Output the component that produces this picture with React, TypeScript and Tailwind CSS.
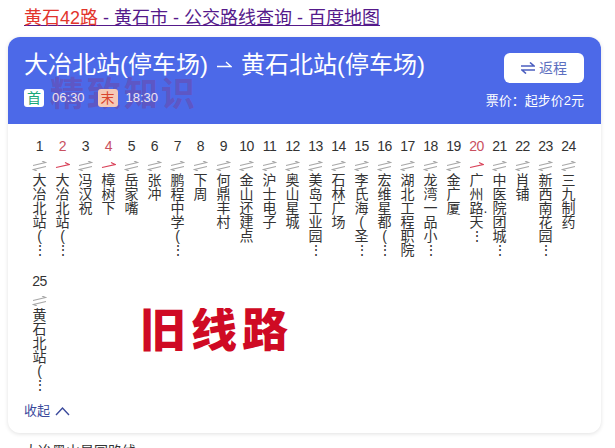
const font = "font-['Liberation_Sans','Noto_Sans_CJK_SC',sans-serif]";

const stops = [
  { name: "大冶北站(⋮" },
  { name: "大冶北站(⋮", one: true },
  { name: "冯汉祝" },
  { name: "樟树下", one: true },
  { name: "岳家嘴" },
  { name: "张冲" },
  { name: "鹏程中学(⋮" },
  { name: "下周" },
  { name: "何鼎丰村" },
  { name: "金山还建点" },
  { name: "沪士电子" },
  { name: "奥山星城" },
  { name: "美岛工业园⋮" },
  { name: "石林广场" },
  { name: "李氏海(圣⋮" },
  { name: "宏维星都(⋮" },
  { name: "湖北工程职院" },
  { name: "龙湾一品小⋮" },
  { name: "金广厦" },
  { name: "广州路.天⋮", one: true },
  { name: "中医院团城⋮" },
  { name: "肖铺" },
  { name: "新西南花园⋮" },
  { name: "三九制药" },
  { name: "黄石北站(⋮" },
];

const BothWays = () => (
  <svg width="15" height="10" viewBox="0 0 15 10" fill="none" stroke="#a8a8a8" strokeWidth="1.2">
    <path d="M1 4.5 L13.5 1.5 L10 0" />
    <path d="M14 5.5 L1.5 8.5 L5 10" />
  </svg>
);

const OneWay = () => (
  <svg width="15" height="10" viewBox="0 0 15 10" fill="none" stroke="#d9435a" strokeWidth="1.2">
    <path d="M1 6.5 L14 3.5 L10 1.5" />
  </svg>
);

const Stop = ({ index, name, one }: { index: number; name: string; one?: boolean }) => (
  <div className="flex h-[126px] w-[23px] flex-col items-center">
    <div className={`text-sm leading-[20px] tracking-[-0.5px] ${one ? "text-[#c9505f]" : "text-[#333]"}`}>{index}</div>
    <div className="mt-[4px] flex h-[11px] items-center">{one ? <OneWay /> : <BothWays />}</div>
    <div className="mt-[2px] w-[14px] text-sm leading-[14px] text-[#333]">
      {(name.match(/.\.?/gu) ?? []).map((c, i) => (
        <div key={i} className={c.length > 1 ? "whitespace-nowrap text-left" : "text-center"}>
          {c}
        </div>
      ))}
    </div>
  </div>
);

const App = () => {
  return (
    <div className={`relative h-[448px] w-[615px] overflow-hidden bg-white ${font}`}>
      <div className="px-6 pt-[7px] text-lg leading-[23px] text-[#551a8b] underline">
        <span className="text-[#e2342c]">黄石42路</span> - 黄石市 - 公交路线查询 - 百度地图
      </div>

      <div className="ml-2 mt-[7px] h-[396px] w-[593px] overflow-hidden rounded-[12px] bg-white shadow-[0_1px_4px_rgba(0,0,0,0.12)]">
        <div className="relative flex h-[87px] justify-between bg-[#4c69e8] pl-4 pr-[17px] text-white">
          <div className="absolute left-[42px] top-[37px] text-[34px] font-bold leading-[40px] tracking-[3px] text-[#7a3a8c]/40">
            精致知识
          </div>
          <div className="relative">
            <div className="mt-[14px] flex items-center text-2xl leading-[28px]">
              大冶北站(停车场)
              <svg className="mx-[9px]" width="15" height="8" viewBox="0 0 15 8" fill="none" stroke="white" strokeWidth="1.3">
                <path d="M0 5.5 H14 L9 1" />
              </svg>
              黄石北站(停车场)
            </div>
            <div className="mt-[9px] flex items-center text-[13px]">
              <span className="flex h-[18px] w-5 items-center justify-center rounded-[3px] bg-white text-sm text-[#1aa87a]">首</span>
              <span className="ml-2 text-[#f0e4ee]">06:30</span>
              <span className="ml-[13px] flex h-[18px] w-5 items-center justify-center rounded-[3px] bg-[#f5c9b6] text-sm text-[#d8452e]">末</span>
              <span className="ml-2 text-[#f0e4ee]">18:30</span>
            </div>
          </div>
          <div className="relative flex flex-col items-end">
            <button className="mt-4 flex h-[30px] w-20 items-center justify-center gap-1 rounded-[6px] bg-white text-sm text-[#5d6fc0]">
              <svg width="14" height="12" viewBox="0 0 14 12" fill="none" stroke="#4c5fc0" strokeWidth="1.6">
                <path d="M0 4 H13 L9 0.5" />
                <path d="M14 8 H1 L5 11.5" />
              </svg>
              返程
            </button>
            <div className="mt-[9px] text-[13px] leading-[18px]">票价：起步价2元</div>
          </div>
        </div>

        <div className="flex flex-wrap gap-y-[9px] pl-5 pt-[12px]">
          {stops.map((s, i) => (
            <Stop key={i} index={i + 1} name={s.name} one={s.one} />
          ))}
        </div>

        <div className="flex items-center gap-[5px] pl-4 pt-[4px] text-[13px] leading-[20px] text-[#3b4a9c]">
          收起
          <svg width="15" height="10" viewBox="0 0 15 10" fill="none" stroke="#3b4a9c" strokeWidth="1.4">
            <path d="M1 9 L7.5 2 L14 9" />
          </svg>
        </div>
      </div>

      <div className="px-6 pt-[8px] text-sm text-[#333]">大冶墨山星园路线</div>

      <div className="pointer-events-none absolute left-[140px] top-[308px] h-[44px] overflow-hidden text-[46px] font-black leading-[44px] tracking-[5px] text-[#cf0a24]">
        旧线路
      </div>
    </div>
  );
};

export default App;
